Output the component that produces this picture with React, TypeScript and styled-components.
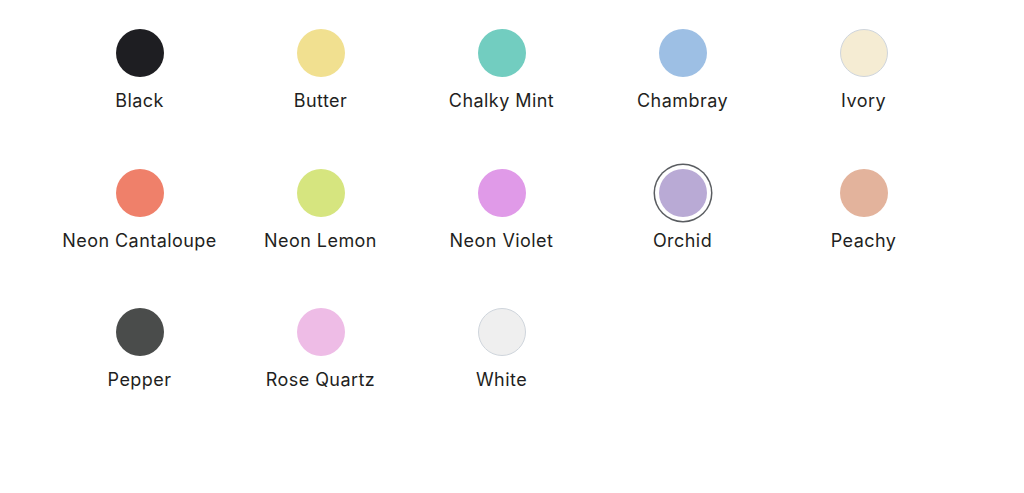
import styled, { createGlobalStyle } from 'styled-components';

const GlobalStyle = createGlobalStyle`
  body {
    margin: 0;
    background: #ffffff;
    font-family: Inter, "Liberation Sans", sans-serif;
  }
`;

type Colour = {
  name: string;
  hex: string;
  bordered?: boolean;
  selected?: boolean;
};

const colours: Colour[] = [
  { name: 'Black', hex: '#1e1e22' },
  { name: 'Butter', hex: '#f1e090' },
  { name: 'Chalky Mint', hex: '#72cdc0' },
  { name: 'Chambray', hex: '#9dbfe4' },
  { name: 'Ivory', hex: '#f5ecd3', bordered: true },
  { name: 'Neon Cantaloupe', hex: '#ef806a' },
  { name: 'Neon Lemon', hex: '#d6e57f' },
  { name: 'Neon Violet', hex: '#e09ae8' },
  { name: 'Orchid', hex: '#b9aad5', selected: true },
  { name: 'Peachy', hex: '#e3b39c' },
  { name: 'Pepper', hex: '#4a4c4b' },
  { name: 'Rose Quartz', hex: '#eebce6' },
  { name: 'White', hex: '#efefef', bordered: true },
];

export const ColourGrid = styled.ul`
  list-style: none;
  margin: 0;
  padding: 29px 0 0 49px;
  display: grid;
  grid-template-columns: repeat(5, 181px);
  row-gap: 53.5px;
`;

export const ColourOption = styled.li`
  display: flex;
  flex-direction: column;
  align-items: center;
  cursor: pointer;
`;

export const Swatch = styled.span<{ $hex: string; $bordered?: boolean; $selected?: boolean }>`
  display: block;
  box-sizing: border-box;
  width: 48px;
  height: 48px;
  border-radius: 50%;
  background-color: ${(p) => p.$hex};
  border: ${(p) => (p.$bordered ? '1px solid #cfd5dc' : 'none')};
  box-shadow: ${(p) => (p.$selected ? '0 0 0 4px #ffffff, 0 0 0 5.5px #5a5d61' : 'none')};
`;

export const ColourName = styled.span`
  margin-top: 10px;
  font-size: 18px;
  line-height: 28px;
  letter-spacing: 0.45px;
  color: #1f1f22;
  white-space: nowrap;
`;

export default function App() {
  return (
    <>
      <GlobalStyle />
      <ColourGrid>
        {colours.map((c) => (
          <ColourOption key={c.name}>
            <Swatch $hex={c.hex} $bordered={c.bordered} $selected={c.selected} />
            <ColourName>{c.name}</ColourName>
          </ColourOption>
        ))}
      </ColourGrid>
    </>
  );
}
